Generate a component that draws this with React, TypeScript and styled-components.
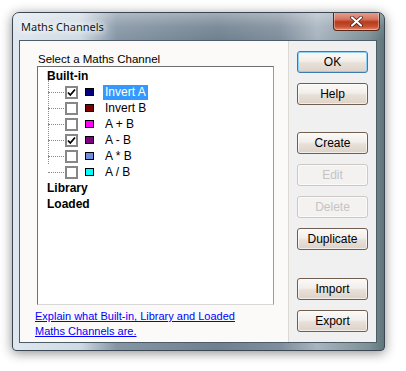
import React, { FC } from "react";
import styled, { createGlobalStyle } from "styled-components";

const GlobalStyle = createGlobalStyle`
  html, body {
    margin: 0;
    padding: 0;
    background: #ffffff;
  }
`;

const Page = styled.div`
  width: 406px;
  height: 371px;
  padding: 12px 0 0 12px;
  box-sizing: border-box;
`;

const Window = styled.div`
  width: 373px;
  height: 339px;
  box-sizing: border-box;
  border: 1px solid #3b4752;
  border-radius: 7px 7px 4px 4px;
  background: linear-gradient(90deg, #dfe7ef 0%, #cfdae4 18%, #8595a4 28%, #6f808f 55%, #7f8e9c 72%, #a8b4c0 82%, #7d9095 96%, #5f767b 100%);
  box-shadow: 0 2px 12px rgba(0, 0, 0, 0.45);
  display: flex;
  flex-direction: column;
  overflow: hidden;
`;

const TitleBar = styled.div`
  height: 27px;
  display: flex;
  align-items: flex-start;
  justify-content: space-between;
  padding: 0 4px 0 8px;
  background: linear-gradient(180deg, rgba(255, 255, 255, 0.35) 0%, rgba(255, 255, 255, 0.1) 50%, rgba(255, 255, 255, 0) 100%);
`;

const Title = styled.span`
  margin-top: 6px;
  font-family: "Noto Sans", "Open Sans", sans-serif;
  font-size: 11px;
  color: #101820;
  text-shadow: 0 0 6px #ffffff, 0 0 8px #ffffff, 0 0 10px #ffffff;
`;

const CloseButton = styled.div`
  width: 47px;
  height: 19px;
  margin-top: -1px;
  box-sizing: border-box;
  border: 1px solid #5b2418;
  border-top: none;
  border-radius: 0 0 4px 4px;
  background: linear-gradient(180deg, #e8a493 0%, #d67560 40%, #b83a1e 55%, #c6502f 80%, #e08b6e 100%);
  box-shadow: inset 0 0 0 1px rgba(255, 255, 255, 0.35);
  display: flex;
  align-items: center;
  justify-content: center;
`;

const Client = styled.div`
  flex: 1;
  margin: 0 7px 7px 6px;
  border: 1px solid #4d5d68;
  background: #f0f0f0;
  display: flex;
`;

const LeftPanel = styled.div`
  width: 269px;
  box-sizing: border-box;
  background: #fbfaf9;
  border-right: 1px solid #dcd8d3;
  padding: 11px 0 0 17px;
  display: flex;
  flex-direction: column;
`;

const GroupLabel = styled.div`
  height: 14px;
  line-height: 14px;
  margin-left: 1px;
  font-family: "Liberation Sans", Arial, sans-serif;
  font-size: 11.5px;
  color: #000000;
`;

const ListBox = styled.div`
  width: 237px;
  height: 239px;
  box-sizing: border-box;
  background: #ffffff;
  border: 1px solid #6f6f6f;
  border-right-color: #9a9a9a;
  border-bottom-color: #d8d8d8;
  padding: 1px 0 0 9px;
  font-family: "Liberation Sans", Arial, sans-serif;
  font-size: 12px;
  color: #000000;
`;

const RootRow = styled.div`
  height: 16px;
  line-height: 16px;
  font-weight: bold;
`;

const Children = styled.div`
  position: relative;
  margin-left: 1px;
  &::before {
    content: "";
    position: absolute;
    left: 0;
    top: -4px;
    height: 84px;
    border-left: 1px dotted #8a8a8a;
  }
`;

const ChildRow = styled.div`
  height: 16px;
  display: flex;
  align-items: center;
`;

const Branch = styled.span`
  width: 16px;
  margin-right: 1px;
  border-top: 1px dotted #8a8a8a;
`;

const CheckBox = styled.span`
  width: 13px;
  height: 13px;
  box-sizing: border-box;
  border: 2px solid #878787;
  background: #ffffff;
  display: flex;
  align-items: center;
  justify-content: center;
`;

const Swatch = styled.span<{ $color: string }>`
  width: 9px;
  height: 8px;
  margin-left: 7px;
  box-sizing: border-box;
  border: 1px solid #000000;
  background: ${({ $color }) => $color};
`;

const ItemLabel = styled.span<{ $selected?: boolean }>`
  margin-left: 9px;
  padding: 0 2px;
  line-height: 15px;
  background: ${({ $selected }) => ($selected ? "#3399ff" : "transparent")};
  color: ${({ $selected }) => ($selected ? "#ffffff" : "#000000")};
`;

const HelpLink = styled.a`
  margin: 4px 0 0 -2px;
  width: 220px;
  font-family: "Liberation Sans", Arial, sans-serif;
  font-size: 11px;
  line-height: 15px;
  color: #0000ff;
  text-decoration: underline;
  cursor: pointer;
`;

const ButtonColumn = styled.div`
  padding: 10px 0 0 8px;
  display: flex;
  flex-direction: column;
`;

const Button = styled.div<{ $gap: number; $disabled?: boolean; $default?: boolean }>`
  width: 71px;
  height: 22px;
  margin-top: ${({ $gap }) => $gap}px;
  box-sizing: border-box;
  border-radius: 3px;
  border: 1px solid ${({ $disabled, $default }) => ($default ? "#3d7bad" : $disabled ? "#cdc8c3" : "#705e50")};
  background: ${({ $disabled }) =>
    $disabled
      ? "#f4f2f0"
      : "linear-gradient(180deg, #fbf9f7 0%, #f2eeea 45%, #e8e0d8 55%, #ddd2c8 100%)"};
  box-shadow: ${({ $default }) => ($default ? "inset 0 0 0 1px #8fd0f5" : "inset 0 0 0 1px rgba(255,255,255,0.6)")};
  display: flex;
  align-items: center;
  justify-content: center;
  font-family: "Liberation Sans", Arial, sans-serif;
  font-size: 12px;
  color: ${({ $disabled }) => ($disabled ? "#c4c4c4" : "#000000")};
`;

const Check: FC = () => (
  <svg width="9" height="9" viewBox="0 0 9 9">
    <path d="M1 4.5 L3.3 7 L8 1.5" stroke="#000" strokeWidth="1.8" fill="none" />
  </svg>
);

const CloseGlyph: FC = () => (
  <svg width="13" height="11" viewBox="0 0 13 11">
    <path d="M2 1.5 L11 9.5 M11 1.5 L2 9.5" stroke="#3a1a12" strokeWidth="3.6" strokeLinecap="round" />
    <path d="M2 1.5 L11 9.5 M11 1.5 L2 9.5" stroke="#ffffff" strokeWidth="2.2" strokeLinecap="round" />
  </svg>
);

type Channel = { name: string; color: string; checked: boolean; selected?: boolean };

const channels: Channel[] = [
  { name: "Invert A", color: "#000080", checked: true, selected: true },
  { name: "Invert B", color: "#800000", checked: false },
  { name: "A + B", color: "#ff00ff", checked: false },
  { name: "A - B", color: "#800080", checked: true },
  { name: "A * B", color: "#6b8fdc", checked: false },
  { name: "A / B", color: "#00ffff", checked: false },
];

const buttons = [
  { label: "OK", gap: 0, def: true },
  { label: "Help", gap: 10 },
  { label: "Create", gap: 27 },
  { label: "Edit", gap: 10, disabled: true },
  { label: "Delete", gap: 10, disabled: true },
  { label: "Duplicate", gap: 10 },
  { label: "Import", gap: 28 },
  { label: "Export", gap: 10 },
];

const App: FC = () => {
  return (
    <Page>
      <GlobalStyle />
      <Window>
        <TitleBar>
          <Title>Maths Channels</Title>
          <CloseButton>
            <CloseGlyph />
          </CloseButton>
        </TitleBar>
        <Client>
          <LeftPanel>
            <GroupLabel>Select a Maths Channel</GroupLabel>
            <ListBox>
              <RootRow>Built-in</RootRow>
              <Children>
                {channels.map((c) => (
                  <ChildRow key={c.name}>
                    <Branch />
                    <CheckBox>{c.checked && <Check />}</CheckBox>
                    <Swatch $color={c.color} />
                    <ItemLabel $selected={c.selected}>{c.name}</ItemLabel>
                  </ChildRow>
                ))}
              </Children>
              <RootRow>Library</RootRow>
              <RootRow>Loaded</RootRow>
            </ListBox>
            <HelpLink>Explain what Built-in, Library and Loaded Maths Channels are.</HelpLink>
          </LeftPanel>
          <ButtonColumn>
            {buttons.map((b) => (
              <Button key={b.label} $gap={b.gap} $disabled={b.disabled} $default={b.def}>
                {b.label}
              </Button>
            ))}
          </ButtonColumn>
        </Client>
      </Window>
    </Page>
  );
};

export default App;
